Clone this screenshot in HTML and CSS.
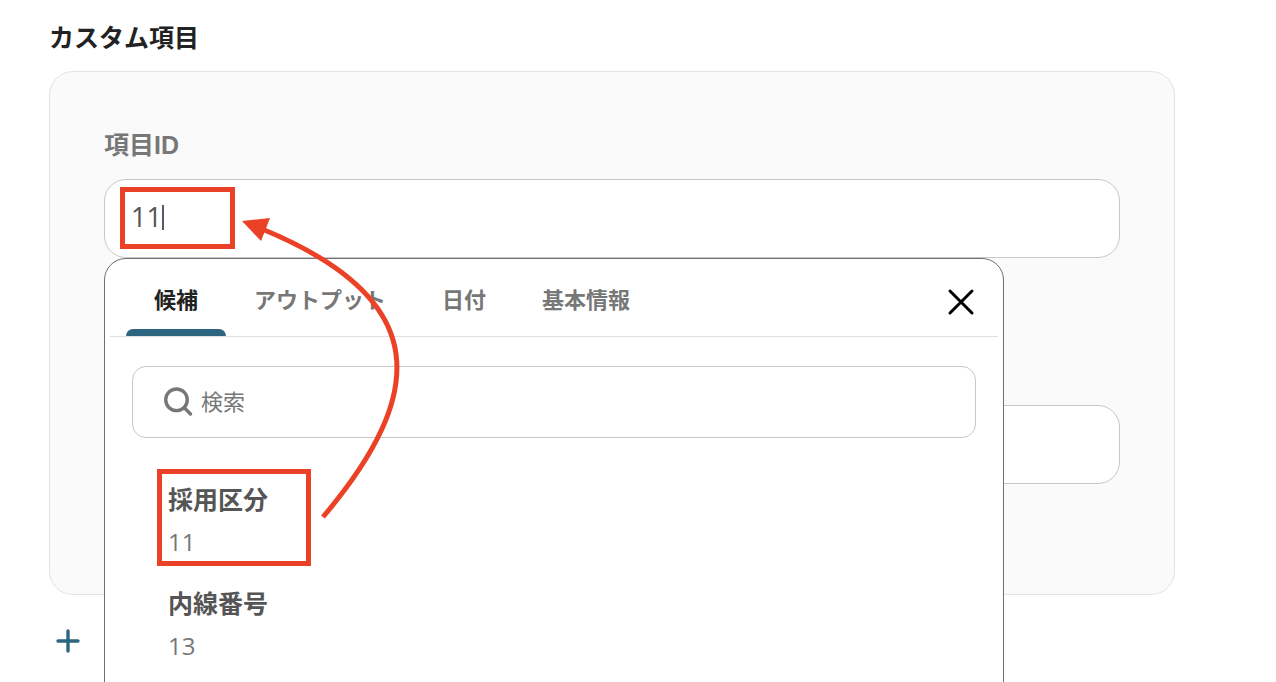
FILE: index.html
```html
<!DOCTYPE html>
<html lang="ja">
<head>
  <meta charset="UTF-8">
  <meta name="viewport" content="width=device-width, initial-scale=1">
  <title>カスタム項目</title>
  <link rel="stylesheet" href="styles.css">
</head>
<body>
  <main class="page">
    <h1>カスタム項目</h1>

    <section class="card">
      <div class="field">
        <label for="item-id">項目ID</label>
        <div class="input-wrap">
          <input type="text" id="item-id" class="text-input" value="11">
          <span class="caret"></span>
          <span class="mark mark-input"></span>

          <!-- 候補ポップアップ -->
          <div class="popup">
            <div class="popup-header">
              <div class="tabs" role="tablist">
                <button type="button" role="tab" class="tab active" aria-selected="true">候補</button>
                <button type="button" role="tab" class="tab">アウトプット</button>
                <button type="button" role="tab" class="tab">日付</button>
                <button type="button" role="tab" class="tab">基本情報</button>
              </div>
              <button type="button" class="close" aria-label="閉じる">
                <svg width="28" height="28" viewBox="0 0 28 28" fill="none" stroke="#000" stroke-width="3" stroke-linecap="round">
                  <path d="M3 3l22 22M25 3L3 25"/>
                </svg>
              </button>
            </div>
            <div class="search">
              <svg width="30" height="30" viewBox="0 0 30 30" fill="none" stroke="#777" stroke-width="3.4" stroke-linecap="round">
                <circle cx="13.5" cy="12.8" r="10.8"/>
                <path d="M21.5 21l6 6"/>
              </svg>
              <input type="text" placeholder="検索" aria-label="検索">
            </div>
            <ul class="options">
              <li class="option">
                <button type="button"><strong>採用区分</strong><span>11</span></button>
                <span class="mark mark-option"></span>
              </li>
              <li class="option">
                <button type="button"><strong>内線番号</strong><span>13</span></button>
              </li>
            </ul>
          </div>
        </div>
      </div>
      <input type="text" class="text-input" aria-label="値">
    </section>

    <button type="button" class="add" aria-label="追加">
      <svg width="24" height="24" viewBox="0 0 24 24" fill="none" stroke="#2d6680" stroke-width="3.4" stroke-linecap="round">
        <path d="M12 2v20M2 12h20"/>
      </svg>
    </button>

    <!-- 候補から入力欄への矢印 -->
    <svg class="arrow" width="420" height="540" viewBox="0 0 420 540">
      <path d="M323 517C426 395 435 300 262 229" fill="none" stroke="#eb4126" stroke-width="5"/>
      <path d="M242 221L270 218L261 241Z" fill="#eb4126"/>
    </svg>
  </main>
</body>
</html>
```

FILE: styles.css
```css
* {
  box-sizing: border-box;
}
body {
  margin: 0;
  background: #fff;
  font-family: "Liberation Sans", "Noto Sans CJK JP", sans-serif;
  color: #222;
}
button, input {
  font-family: inherit;
}
button {
  padding: 0;
  border: none;
  background: none;
  cursor: pointer;
}

.page {
  position: relative;
  height: 100vh;
  padding: 20px 101px 0 49px;
  overflow: hidden;
}
h1 {
  margin: 0 0 15px;
  font-size: 25px;
  line-height: 36px;
}

/* 項目カード */
.card {
  padding: 55px 54px 110px;
  border: 1px solid #e3e3e3;
  border-radius: 24px;
  background: #fafafa;
}
.field {
  margin-bottom: 147px;
}
.field label {
  display: block;
  margin-bottom: 16px;
  font-size: 25px;
  font-weight: bold;
  line-height: 36px;
  color: #777;
}
.input-wrap {
  position: relative;
}
.text-input {
  display: block;
  width: 100%;
  height: 79px;
  padding: 0 26px 4px;
  border: 1px solid #c8c8c8;
  border-radius: 22px;
  background: #fff;
  font-family: "Open Sans", "Noto Sans CJK JP", sans-serif;
  font-size: 27px;
  color: #555;
  outline: none;
}
.caret {
  position: absolute;
  top: 26px;
  left: 58px;
  width: 2px;
  height: 25px;
  background: #555a65;
}

/* 赤枠 */
.mark {
  position: absolute;
  border: 5px solid #eb4126;
  pointer-events: none;
}
.mark-input {
  top: 8px;
  left: 16px;
  width: 115px;
  height: 62px;
}
.mark-option {
  top: -9px;
  left: -11px;
  width: 154px;
  height: 97px;
}
.arrow {
  position: absolute;
  top: 0;
  left: 0;
  pointer-events: none;
}

/* 候補ポップアップ */
.popup {
  position: absolute;
  top: 100%;
  left: 0;
  right: 116px;
  padding: 0 5px 60px;
  border: 1px solid #707070;
  border-radius: 22px 22px 0 0;
  background: #fff;
}
.popup-header {
  display: flex;
  justify-content: space-between;
  align-items: center;
  height: 78px;
  padding: 0 23px 0 16px;
  border-bottom: 1px solid #e0e0e0;
}
.tabs {
  display: flex;
  align-self: stretch;
}
.tab {
  display: flex;
  flex-direction: column;
  padding: 25px 28px 0;
  font-size: 22px;
  font-weight: bold;
  line-height: 34px;
  color: #777;
}
.tab.active {
  color: #222;
}
.tab.active::after {
  content: "";
  height: 7px;
  margin: 11px -28px 0;
  border-radius: 7px 7px 0 0;
  background: #2d6680;
}
.close {
  display: flex;
  margin-top: 8px;
}
.search {
  display: flex;
  align-items: center;
  gap: 8px;
  height: 72px;
  margin: 29px 22px 0;
  padding: 0 30px;
  border: 1px solid #c8c8c8;
  border-radius: 14px;
}
.search input {
  flex: 1;
  min-width: 0;
  padding: 2px 0 0;
  border: none;
  background: none;
  font-size: 22px;
  line-height: 32px;
  outline: none;
}
.search input::placeholder {
  color: #777;
  opacity: 1;
}

.options {
  display: grid;
  gap: 24px;
  margin: 40px 58px 0;
  padding: 0;
  list-style: none;
}
.option {
  position: relative;
}
.option button {
  display: flex;
  flex-direction: column;
  gap: 4px;
  width: 100%;
  text-align: left;
}
.option strong {
  font-size: 25px;
  line-height: 44px;
  color: #555;
}
.option span {
  font-family: "Open Sans", "Noto Sans CJK JP", sans-serif;
  font-size: 24px;
  line-height: 32px;
  color: #777;
}

.add {
  display: flex;
  margin: 34px 0 0 7px;
}
```
